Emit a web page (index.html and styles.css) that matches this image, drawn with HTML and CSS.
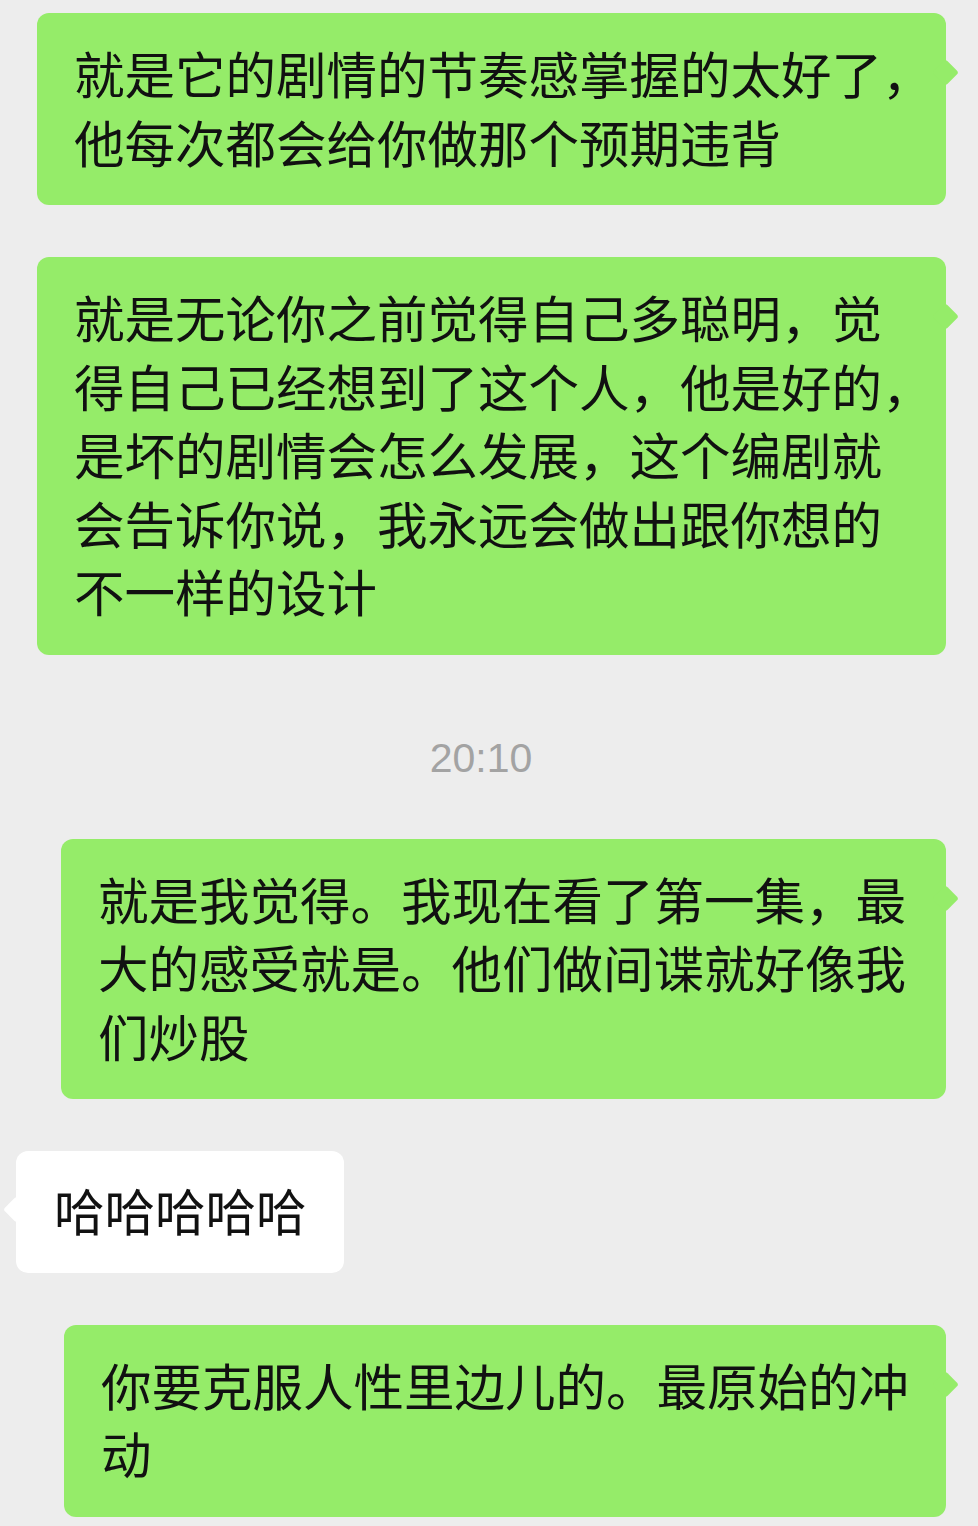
FILE: index.html
```html
<!DOCTYPE html>
<html lang="zh-CN">

<head>
    <meta charset="UTF-8">
    <meta name="viewport" content="width=device-width, initial-scale=1.0">
    <title>聊天记录</title>
    <link rel="stylesheet" href="styles.css">
</head>

<body>
    <div class="chat">
        <div class="row row-right">
            <div class="bubble bubble-green bubble-full">
                <span class="line">就是它的剧情的节奏感掌握的太好了，</span>
                <span class="line">他每次都会给你做那个预期违背</span>
            </div>
        </div>

        <div class="row row-right">
            <div class="bubble bubble-green bubble-full">
                <span class="line">就是无论你之前觉得自己多聪明，觉</span>
                <span class="line">得自己已经想到了这个人，他是好的，</span>
                <span class="line">是坏的剧情会怎么发展，这个编剧就</span>
                <span class="line">会告诉你说，我永远会做出跟你想的</span>
                <span class="line">不一样的设计</span>
            </div>
        </div>

        <div class="time">20:10</div>

        <div class="row row-right">
            <div class="bubble bubble-green bubble-mid">
                <span class="line">就是我觉得。我现在看了第一集，最</span>
                <span class="line">大的感受就是。他们做间谍就好像我</span>
                <span class="line">们炒股</span>
            </div>
        </div>

        <div class="row row-left">
            <div class="bubble bubble-white">
                <span class="line">哈哈哈哈哈</span>
            </div>
        </div>

        <div class="row row-right">
            <div class="bubble bubble-green bubble-short">
                <span class="line">你要克服人性里边儿的。最原始的冲</span>
                <span class="line">动</span>
            </div>
        </div>
    </div>
</body>

</html>
```

FILE: styles.css
```css
body {
    margin: 0;
    background-color: #ededed;
    font-family: "Noto Sans CJK SC", "Noto Sans", sans-serif;
}

.chat {
    display: flex;
    flex-direction: column;
    gap: 52px;
    padding: 13px 0 20px;
}

.row {
    display: flex;
}

.row-right {
    justify-content: flex-end;
    padding-right: 32px;
}

.row-left {
    justify-content: flex-start;
    padding-left: 16px;
}

.bubble {
    position: relative;
    box-sizing: border-box;
    padding: 25px 38px 30px 37px;
    border-radius: 12px;
    font-size: 50.5px;
    line-height: 68.5px;
    color: #111111;
}

.bubble::after {
    content: "";
    position: absolute;
    top: 50px;
    width: 19px;
    height: 19px;
    border-radius: 3px;
    transform: rotate(45deg);
}

.bubble-green {
    background-color: #95ec69;
}

.bubble-green::after {
    right: -9px;
    background-color: #95ec69;
}

.bubble-white {
    background-color: #ffffff;
    padding: 24px 37px 29px 38px;
}

.bubble-white::after {
    left: -9px;
    top: 49px;
    background-color: #ffffff;
}

.bubble-full {
    width: 909px;
}

.bubble-mid {
    width: 885px;
}

.bubble-short {
    width: 882px;
}

.line {
    display: block;
    white-space: nowrap;
}

.time {
    align-self: center;
    margin: 26px 0 4px;
    padding-right: 16px;
    font-family: "Liberation Sans", Arial, sans-serif;
    font-size: 41px;
    line-height: 50px;
    color: #a3a3a3;
}
```
